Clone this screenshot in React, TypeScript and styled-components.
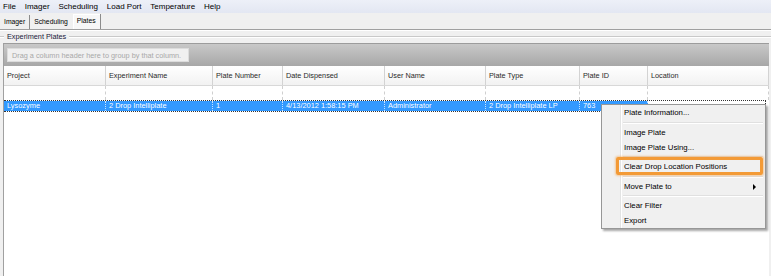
import React from 'react';
import styled, { createGlobalStyle } from 'styled-components';

const GlobalStyle = createGlobalStyle`
  html, body { margin: 0; padding: 0; background: #ffffff; }
  body { font-family: "Liberation Sans", Arial, sans-serif; }
`;

const COLS = '102px 107px 70px 102px 101px 94px 68px 1fr';

const Window = styled.div`
  position: relative;
  width: 771px;
  height: 276px;
  overflow: hidden;
  background: #f0f0f0;
  display: flex;
  flex-direction: column;
  font-family: "Liberation Sans", Arial, sans-serif;
  color: #000;
`;

const MenuBar = styled.div`
  flex: none;
  height: 13px;
  display: flex;
  align-items: center;
  gap: 8.8px;
  padding-left: 3px;
  background: linear-gradient(#edf0f8, #e3e7f2);
  font-size: 8px;
  line-height: 13px;
  color: #000;
`;

const MenuBarItem = styled.span`
  white-space: nowrap;
`;

const TabStrip = styled.div`
  flex: none;
  height: 16px;
  display: flex;
  align-items: flex-end;
  background: #f0f0f0;
  border-bottom: 1px solid #a0a0a0;
  box-shadow: 0 1px 0 #ffffff;
`;

const Tab = styled.div<{ $sep?: boolean; $active?: boolean }>`
  height: ${(p) => (p.$active ? 15 : 14)}px;
  line-height: ${(p) => (p.$active ? 13 : 14)}px;
  padding: 0 4px;
  font-size: 6.8px;
  white-space: nowrap;
  color: #000;
  border-right: ${(p) => (p.$sep ? '1px solid #8c8c8c' : '1px solid transparent')};
  background: ${(p) => (p.$active ? '#f7f7f7' : 'transparent')};
  box-shadow: ${(p) => (p.$active ? 'inset 1px 1px 0 #ffffff' : 'none')};
`;

const GroupBox = styled.div`
  flex: 1;
  display: flex;
  flex-direction: column;
  min-height: 0;
`;

const GroupTitle = styled.div`
  flex: none;
  height: 13px;
  display: flex;
  align-items: center;
  gap: 3px;
  font-size: 7.3px;
  color: #1a1a3a;
`;

const TitleLine = styled.span<{ $grow?: boolean }>`
  height: 1px;
  background: #c9c9c9;
  border-bottom: 1px solid #ffffff;
  width: ${(p) => (p.$grow ? 'auto' : '4px')};
  flex: ${(p) => (p.$grow ? '1' : 'none')};
`;

const GroupBody = styled.div`
  flex: 1;
  display: flex;
  padding: 0 2px 0 3px;
  min-height: 0;
`;

const Grid = styled.div`
  flex: 1;
  display: flex;
  flex-direction: column;
  background: #ffffff;
  border-left: 1px solid #a0a0a0;
  border-top: 1px solid #9c9c9c;
  min-width: 0;
`;

const GroupByPanel = styled.div`
  flex: none;
  height: 22px;
  display: flex;
  align-items: center;
  padding-left: 3px;
  background: linear-gradient(#c8c8c8, #a7a7a7);
`;

const GroupByHint = styled.div`
  width: 182px;
  height: 14px;
  box-sizing: border-box;
  display: flex;
  align-items: center;
  padding-left: 4px;
  background: #f0f0f0;
  border: 1px solid #dcdcdc;
  font-size: 7.3px;
  color: #a8a8a8;
  white-space: nowrap;
`;

const HeaderRow = styled.div`
  flex: none;
  height: 20px;
  display: grid;
  grid-template-columns: ${COLS};
  background: linear-gradient(#ffffff, #f2f2f2);
  border-bottom: 1px solid #d8d8d8;
  box-sizing: border-box;
`;

const HeaderCell = styled.div`
  display: flex;
  align-items: center;
  padding-left: 3px;
  border-right: 1px solid #d3d3d3;
  font-size: 7.3px;
  color: #2a2a2a;
  white-space: nowrap;
  overflow: hidden;
`;

const FilterRow = styled.div`
  flex: none;
  height: 14px;
  display: grid;
  grid-template-columns: ${COLS};
`;

const FilterCell = styled.div`
  border-right: 1px dashed #cfcfcf;
`;

const DataRow = styled.div`
  flex: none;
  height: 10px;
  margin-right: 3px;
  display: grid;
  grid-template-columns: ${COLS};
  border-top: 1px dotted #333333;
  border-bottom: 1px dotted #333333;
  border-right: 1px dotted #333333;
`;

const DataCell = styled.div<{ $selected?: boolean }>`
  display: flex;
  align-items: center;
  padding-left: 3px;
  font-size: 7.4px;
  line-height: 10px;
  white-space: nowrap;
  overflow: hidden;
  color: ${(p) => (p.$selected ? '#ffffff' : '#000000')};
  background: ${(p) => (p.$selected ? '#3399ff' : 'transparent')};
  border-right: 1px dotted ${(p) => (p.$selected ? 'rgba(255,255,255,0.7)' : 'transparent')};
`;

const GridFill = styled.div`
  flex: 1;
  background: #ffffff;
`;

const ContextMenu = styled.div`
  position: absolute;
  left: 601px;
  top: 104px;
  width: 165px;
  box-sizing: border-box;
  border: 1px solid #979797;
  background: linear-gradient(
    to right,
    #f0f0f0 0 18px,
    #e2e3e3 18px 19px,
    #ffffff 19px 20px,
    #f0f0f0 20px
  );
  box-shadow: 2px 2px 2px rgba(0, 0, 0, 0.35);
  display: flex;
  flex-direction: column;
  font-size: 7.8px;
  color: #000000;
`;

const MenuItem = styled.div`
  height: 15px;
  display: flex;
  align-items: center;
  justify-content: space-between;
  padding: 0 9px 0 22px;
  white-space: nowrap;
`;

const MenuSeparator = styled.div<{ $h: number }>`
  height: ${(p) => p.$h}px;
  display: flex;
  align-items: center;
  padding: 0 2px 0 21px;
  &::after {
    content: '';
    flex: 1;
    height: 1px;
    background: #e0e0e0;
    border-bottom: 1px solid #ffffff;
  }
`;

const SubArrow = styled.span`
  width: 0;
  height: 0;
  border-top: 3px solid transparent;
  border-bottom: 3px solid transparent;
  border-left: 3px solid #000000;
`;

const Callout = styled.div`
  position: absolute;
  left: 14px;
  top: 52px;
  width: 147px;
  height: 18px;
  box-sizing: border-box;
  border: 3px solid #f39a36;
  border-radius: 2px;
  box-shadow: 0 0 2px 1px rgba(243, 154, 54, 0.45);
  pointer-events: none;
`;

const headers = [
  'Project',
  'Experiment Name',
  'Plate Number',
  'Date Dispensed',
  'User Name',
  'Plate Type',
  'Plate ID',
  'Location',
];

const row = [
  'Lysozyme',
  '2 Drop Intelliplate',
  '1',
  '4/13/2012 1:58:15 PM',
  'Administrator',
  '2 Drop Intelliplate LP',
  '763',
  '',
];

export default function App() {
  return (
    <>
      <GlobalStyle />
      <Window>
        <MenuBar>
          {['File', 'Imager', 'Scheduling', 'Load Port', 'Temperature', 'Help'].map((m) => (
            <MenuBarItem key={m}>{m}</MenuBarItem>
          ))}
        </MenuBar>
        <TabStrip>
          <Tab $sep>Imager</Tab>
          <Tab>Scheduling</Tab>
          <Tab $sep $active>
            Plates
          </Tab>
        </TabStrip>
        <GroupBox>
          <GroupTitle>
            <TitleLine />
            <span>Experiment Plates</span>
            <TitleLine $grow />
          </GroupTitle>
          <GroupBody>
            <Grid>
              <GroupByPanel>
                <GroupByHint>Drag a column header here to group by that column.</GroupByHint>
              </GroupByPanel>
              <HeaderRow>
                {headers.map((h) => (
                  <HeaderCell key={h}>{h}</HeaderCell>
                ))}
              </HeaderRow>
              <FilterRow>
                {headers.map((h) => (
                  <FilterCell key={h} />
                ))}
              </FilterRow>
              <DataRow>
                {row.map((v, i) => (
                  <DataCell key={i} $selected={i < 7}>
                    {v}
                  </DataCell>
                ))}
              </DataRow>
              <GridFill />
            </Grid>
          </GroupBody>
        </GroupBox>
        <ContextMenu>
          <MenuItem>Plate Information...</MenuItem>
          <MenuSeparator $h={5} />
          <MenuItem>Image Plate</MenuItem>
          <MenuItem>Image Plate Using...</MenuItem>
          <MenuSeparator $h={4} />
          <MenuItem>Clear Drop Location Positions</MenuItem>
          <MenuSeparator $h={5} />
          <MenuItem>
            <span>Move Plate to</span>
            <SubArrow />
          </MenuItem>
          <MenuSeparator $h={4} />
          <MenuItem>Clear Filter</MenuItem>
          <MenuItem>Export</MenuItem>
          <Callout />
        </ContextMenu>
      </Window>
    </>
  );
}
